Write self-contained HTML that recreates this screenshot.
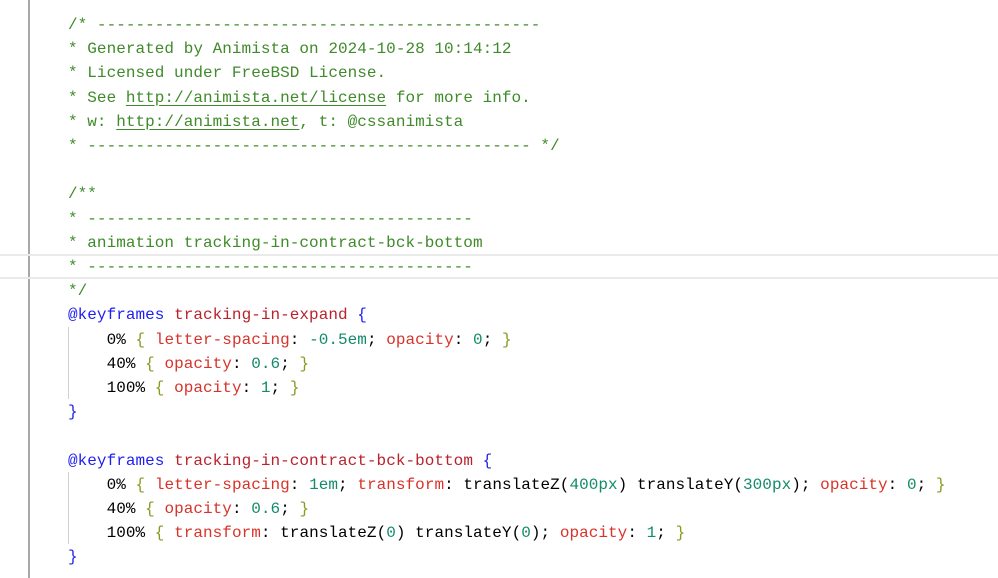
<!DOCTYPE html>
<html><head><meta charset="utf-8"><style>
html,body{margin:0;padding:0;background:#fff;width:998px;height:578px;overflow:hidden}
.g{position:absolute;left:28px;top:0;width:2px;height:578px;background:#a8a8a8}
.hl{position:absolute;left:0;top:254px;width:998px;height:21px;border-top:2px solid #eaeaea;border-bottom:2px solid #eaeaea}
.ig{position:absolute;left:68px;width:1px;background:#d0d0d0}
pre{position:absolute;left:68px;top:13px;margin:0;font-family:"Liberation Mono",monospace;font-size:16px;letter-spacing:0.04px;line-height:24.2px;color:#000}
.c{color:#3f8a2a}
.u{text-decoration:underline;text-underline-offset:3px}
.k{color:#1f1ff0}
.s{color:#b8232d}
.p{color:#d8332a}
.n{color:#138a6a}
.b{color:#8a9a20}
</style></head><body>
<div class="g"></div>
<div class="hl"></div>
<div class="ig" style="top:327px;height:72px"></div>
<div class="ig" style="top:472px;height:72px"></div>
<pre><span class="c">/* ----------------------------------------------
* Generated by Animista on 2024-10-28 10:14:12
* Licensed under FreeBSD License.
* See <span class="u">http://animista.net/license</span> for more info.
* w: <span class="u">http://animista.net</span>, t: @cssanimista
* ---------------------------------------------- */</span>

<span class="c">/**
* ----------------------------------------
* animation tracking-in-contract-bck-bottom
* ----------------------------------------
*/</span>
<span class="k">@keyframes</span> <span class="s">tracking-in-expand</span> <span class="k">{</span>
    0% <span class="b">{</span> <span class="p">letter-spacing</span>: <span class="n">-0.5em</span>; <span class="p">opacity</span>: <span class="n">0</span>; <span class="b">}</span>
    40% <span class="b">{</span> <span class="p">opacity</span>: <span class="n">0.6</span>; <span class="b">}</span>
    100% <span class="b">{</span> <span class="p">opacity</span>: <span class="n">1</span>; <span class="b">}</span>
<span class="k">}</span>

<span class="k">@keyframes</span> <span class="s">tracking-in-contract-bck-bottom</span> <span class="k">{</span>
    0% <span class="b">{</span> <span class="p">letter-spacing</span>: <span class="n">1em</span>; <span class="p">transform</span>: translateZ(<span class="n">400px</span>) translateY(<span class="n">300px</span>); <span class="p">opacity</span>: <span class="n">0</span>; <span class="b">}</span>
    40% <span class="b">{</span> <span class="p">opacity</span>: <span class="n">0.6</span>; <span class="b">}</span>
    100% <span class="b">{</span> <span class="p">transform</span>: translateZ(<span class="n">0</span>) translateY(<span class="n">0</span>); <span class="p">opacity</span>: <span class="n">1</span>; <span class="b">}</span>
<span class="k">}</span></pre>
</body></html>
